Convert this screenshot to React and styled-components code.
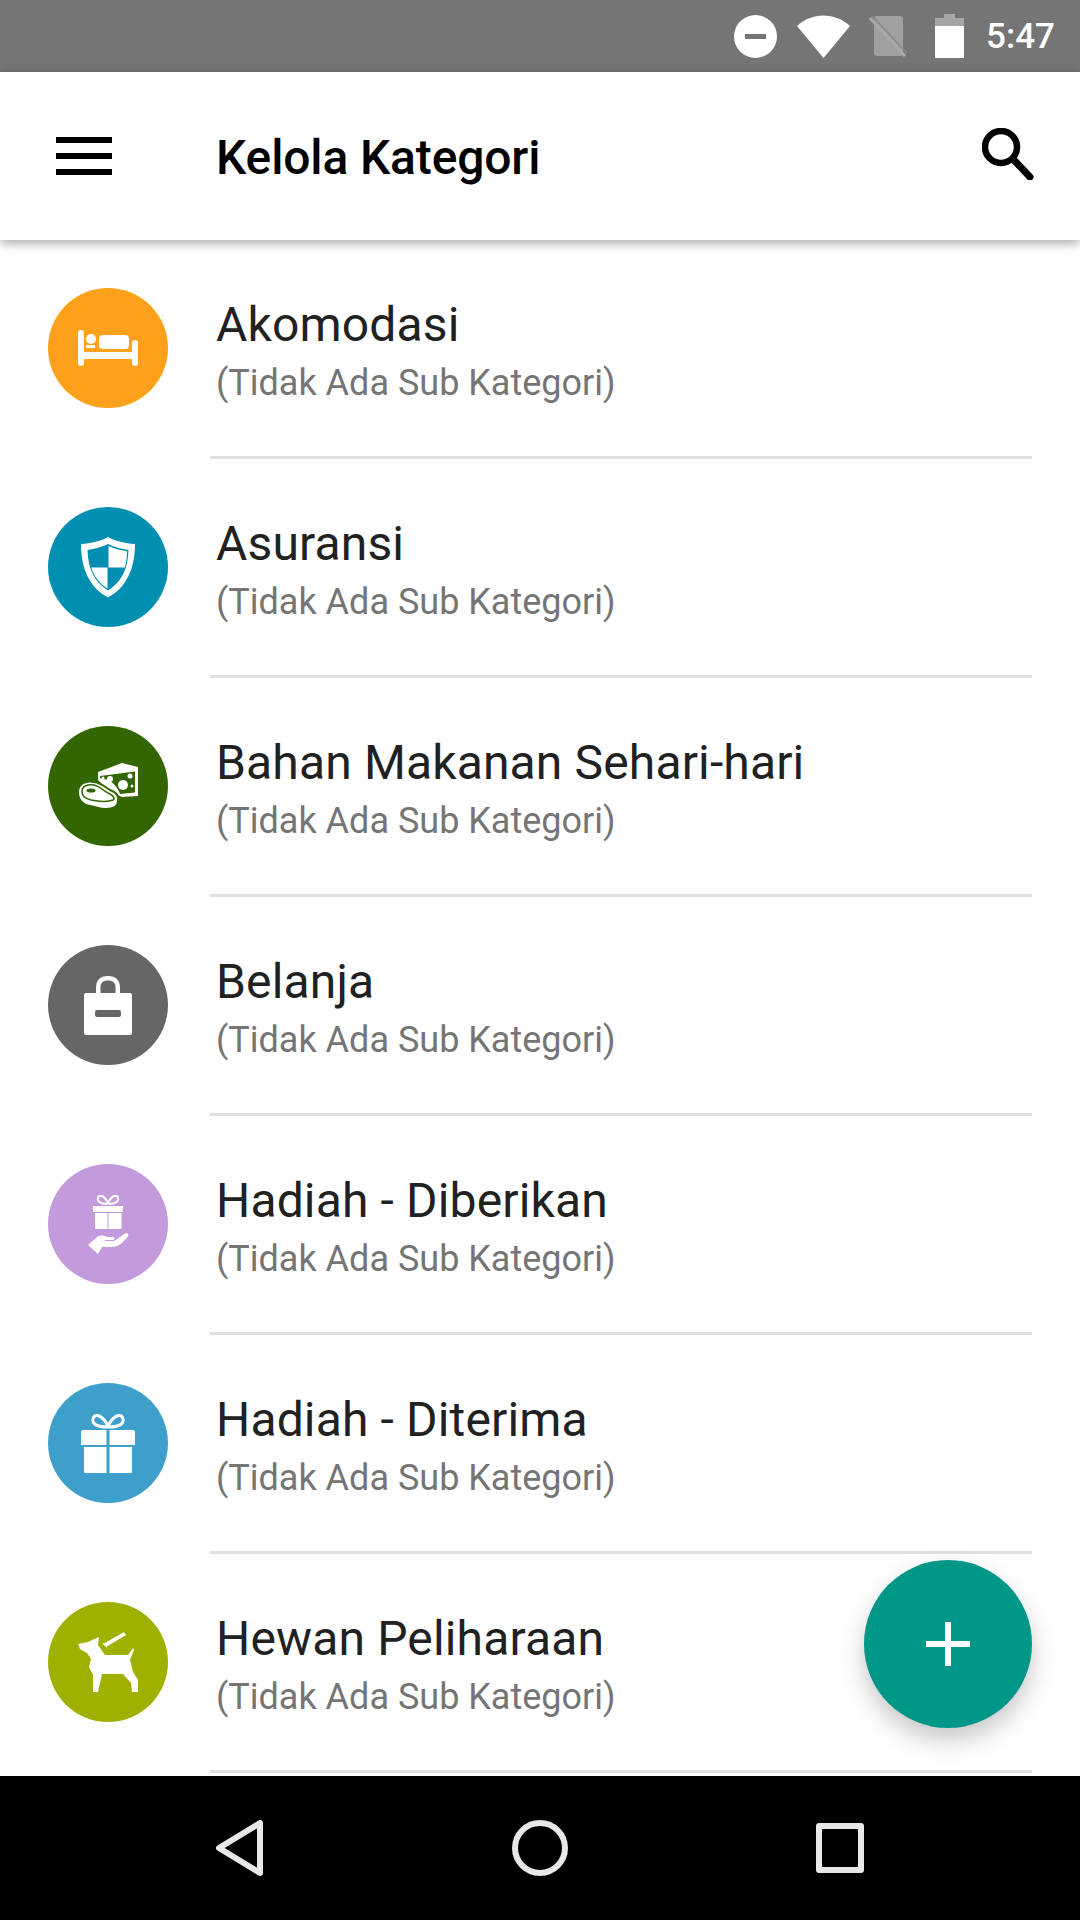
import React from "react";
import styled, { createGlobalStyle } from "styled-components";

const GlobalStyle = createGlobalStyle`
  html, body {
    margin: 0;
    padding: 0;
    background: #fff;
    font-family: Roboto, "Noto Sans", sans-serif;
  }
`;

const Screen = styled.div`
  position: relative;
  display: flex;
  flex-direction: column;
  width: 1080px;
  height: 1920px;
  overflow: hidden;
  background: #fff;
`;

const StatusBar = styled.div`
  display: flex;
  align-items: center;
  justify-content: flex-end;
  flex: none;
  height: 72px;
  padding-right: 25px;
  background: #757575;
`;

const StatusIcon = styled.svg`
  display: block;
  flex: none;
  margin-right: ${({ $gap }) => $gap}px;
`;

const Clock = styled.span`
  font-size: 35px;
  font-weight: 500;
  color: #fff;
`;

const AppBar = styled.header`
  position: relative;
  z-index: 2;
  display: flex;
  align-items: center;
  flex: none;
  height: 168px;
  padding: 0 46px 0 56px;
  background: #fff;
  box-shadow: 0 3px 10px rgba(0, 0, 0, 0.35);
`;

const Title = styled.h1`
  flex: 1;
  margin: 2px 0 0 104px;
  font-size: 48px;
  font-weight: 500;
  letter-spacing: -0.15px;
  color: #000;
`;

const SearchIcon = styled.svg`
  display: block;
  flex: none;
  margin-bottom: 4px;
`;

const List = styled.main`
  flex: 1;
  min-height: 0;
  overflow: hidden;
`;

const Row = styled.div`
  display: flex;
  height: 219px;
  padding-left: 48px;
`;

const Badge = styled.div`
  display: flex;
  align-items: center;
  justify-content: center;
  flex: none;
  width: 120px;
  height: 120px;
  margin-top: 48px;
  border-radius: 50%;
  background: ${({ $color }) => $color};
`;

const RowBody = styled.div`
  flex: 1;
  margin: 0 48px 0 42px;
  padding: 0 0 0 6px;
  border-bottom: 3px solid #e0e0e0;
`;

const RowTitle = styled.div`
  margin-top: 57px;
  font-size: 48px;
  line-height: 56px;
  letter-spacing: 0.15px;
  color: #212121;
`;

const RowSub = styled.div`
  margin-top: 6px;
  font-size: 36px;
  line-height: 48px;
  color: #757575;
`;

const Fab = styled.button`
  position: absolute;
  left: 864px;
  top: 1560px;
  display: flex;
  align-items: center;
  justify-content: center;
  width: 168px;
  height: 168px;
  padding: 0;
  border: none;
  border-radius: 50%;
  background: #009688;
  box-shadow: 0 12px 24px rgba(0, 0, 0, 0.22);
`;

const NavBar = styled.nav`
  display: flex;
  align-items: center;
  justify-content: space-between;
  flex: none;
  height: 144px;
  padding: 0 216px;
  background: #000;
`;

const TEAL = "#008FB0";
const LEAF = "#336600";

const BADGE_ICONS = {
  bed: (
    <>
      <rect x="30" y="42" width="6" height="36" rx="3" />
      <rect x="84" y="52" width="6" height="26" rx="3" />
      <rect x="35" y="64" width="50" height="7" />
      <circle cx="43" cy="51" r="5" />
      <rect x="38" y="57" width="9" height="3" />
      <rect x="51" y="47" width="30" height="14" rx="4" />
    </>
  ),
  shield: (
    <>
      <path d="M60 30C53 34 43 36.500 33 37C33 62 42 81 60 90.500C78 81 87 62 87 37C77 36.500 67 34 60 30Z" />
      <path
        d="M60 37C54 40 47 42 39.500 43C40 62 46.500 75 60 83.500C73.500 75 80 62 80.500 43C73 42 66 40 60 37Z"
        fill={TEAL}
      />
      <path d="M60.500 39C66 41.500 72 43.300 79 44.200C79 50 78.300 55.500 76.800 60.500H60.500Z" />
      <path d="M59.500 60.500H43.200C46 69.500 51.500 76.500 59.500 81.500Z" />
    </>
  ),
  food: (
    <>
      <path d="M50 46L74 37L90 41V70L74 71L62 66L50 54Z" />
      <path d="M52 50L87 45.500V66.500L72 68C70 62 66 57 60 54L52 52Z" fill={LEAF} />
      <circle cx="62" cy="53" r="3" />
      <circle cx="75" cy="59" r="5" />
      <circle cx="82" cy="50" r="2.500" />
      <circle cx="84" cy="60" r="1.500" />
      <circle cx="55" cy="52" r="1.500" />
      <path
        d="M30 66C30 58 38 54 46 56C54 57 58 62 62 64C68 66 71 70 70 75C70 81 64 83 58 83C52 83 48 81 42 80C35 79 30 74 30 66Z"
        stroke={LEAF}
        strokeWidth="2"
      />
      <path
        d="M34 65C34 60 40 58 46 59C53 61 57 66 62 68C66 70 67 73 65 74C58 77 50 75 43 74C38 73 34 70 34 65Z"
        fill="none"
        stroke={LEAF}
        strokeWidth="1.500"
      />
      <ellipse cx="43" cy="64.500" rx="4.500" ry="2" fill={LEAF} />
    </>
  ),
  bag: (
    <>
      <path d="M48 48V43C48 35 52 31 60 31C68 31 72 35 72 43V48H67.500V42C67.500 38 65 35.500 60 35.500C55 35.500 52.500 38 52.500 42V48Z" />
      <path
        fillRule="evenodd"
        d="M38 48H82A2 2 0 0 1 84 50V88A2 2 0 0 1 82 90H38A2 2 0 0 1 36 88V50A2 2 0 0 1 38 48ZM49 65A2 2 0 0 0 47 67V70A2 2 0 0 0 49 72H71A2 2 0 0 0 73 70V67A2 2 0 0 0 71 65Z"
      />
    </>
  ),
  giftHand: (
    <>
      <path
        fill="none"
        stroke="#fff"
        strokeWidth="2"
        d="M59 40C52 40 49 37 50 34C51 30 56 31 60 39C64 31 69 30 70 34C71 37 68 40 61 40"
      />
      <rect x="45" y="42" width="30" height="6" />
      <rect x="47" y="49" width="12.500" height="16" />
      <rect x="60.500" y="49" width="13" height="16" />
      <path d="M40 81L49 73C52 71 56 71 59 73L65 73C67 73 67 76 65 76L57 76L57 77L66 77C70 75 74 71 78 69C80 69 81 71 80 72C76 78 71 82 66 83L54 83L50 90Z" />
    </>
  ),
  gift: (
    <>
      <path
        fill="none"
        stroke="#fff"
        strokeWidth="3"
        d="M59 44C49 44 44 41 45 36C46 30 54 31 60 43C66 31 74 30 75 36C76 41 71 44 61 44"
      />
      <path d="M35 47H58.500V62H33.500A.5 .5 0 0 1 33 61.500V49A2 2 0 0 1 35 47ZM61.500 47H85A2 2 0 0 1 87 49V61.500A.5 .5 0 0 1 86.500 62H61.500Z" />
      <path d="M36 64H58.500V90H37A1 1 0 0 1 36 89ZM61.500 64H84V89A1 1 0 0 1 83 90H61.500Z" />
    </>
  ),
  dog: (
    <>
      <path d="M30 42L40 40L51 35L50 43L57 53H80L85 46L86 48L82 58L85 70L90 78V90H84L83 81L75 72H54L50 90H45V73L41 65L43 57L39 51L32 47Z" />
      <path d="M76 30L78 33L59 44.500L59 46L54 41L56 41.500Z" />
    </>
  ),
};

const CATEGORIES = [
  { name: "Akomodasi", color: "#FFA11A", icon: "bed" },
  { name: "Asuransi", color: TEAL, icon: "shield" },
  { name: "Bahan Makanan Sehari-hari", color: LEAF, icon: "food" },
  { name: "Belanja", color: "#666666", icon: "bag" },
  { name: "Hadiah - Diberikan", color: "#C39BDD", icon: "giftHand" },
  { name: "Hadiah - Diterima", color: "#3F9FCB", icon: "gift" },
  { name: "Hewan Peliharaan", color: "#A0B000", icon: "dog" },
];

function App() {
  return (
    <Screen>
      <GlobalStyle />
      <StatusBar>
        <StatusIcon $gap={20} width="43" height="43" viewBox="0 0 43 43" fill="#fff">
          <path
            fillRule="evenodd"
            d="M21.500 0A21.500 21.500 0 1 1 21.500 43A21.500 21.500 0 1 1 21.500 0ZM11 19V24H32V19Z"
          />
        </StatusIcon>
        <StatusIcon $gap={19} width="53" height="43" viewBox="0 0 53 43" fill="#fff">
          <path d="M0 11C15 -3 38 -3 53 11L26.500 43Z" />
        </StatusIcon>
        <StatusIcon $gap={28} width="38" height="43" viewBox="0 0 38 43">
          <path d="M8 1H31A3 3 0 0 1 34 4V39A2 2 0 0 1 32 41H8A3 3 0 0 1 5 38V4A3 3 0 0 1 8 1Z" fill="#a0a0a0" />
          <path d="M3 1L38 38" stroke="#8a8a8a" strokeWidth="1.500" />
          <path d="M1 3L36 41" stroke="#a8a8a8" strokeWidth="3" />
        </StatusIcon>
        <StatusIcon $gap={22} width="29" height="44" viewBox="0 0 29 44">
          <path d="M0 4H9V0H20V4H29V12H0Z" fill="#a6a6a6" />
          <rect y="12" width="29" height="32" fill="#fff" />
        </StatusIcon>
        <Clock>5:47</Clock>
      </StatusBar>

      <AppBar>
        <svg width="56" height="38" viewBox="0 0 56 38" fill="#000">
          <rect width="56" height="6" />
          <rect y="16" width="56" height="6" />
          <rect y="32" width="56" height="6" />
        </svg>
        <Title>Kelola Kategori</Title>
        <SearchIcon width="52" height="52" viewBox="0 0 52 52" fill="none" stroke="#000">
          <circle cx="19" cy="19" r="16" strokeWidth="6.500" />
          <path d="M31 31L48 49" strokeWidth="7" strokeLinecap="round" />
        </SearchIcon>
      </AppBar>

      <List>
        {CATEGORIES.map((category) => (
          <Row key={category.name}>
            <Badge $color={category.color}>
              <svg width="120" height="120" viewBox="0 0 120 120" fill="#fff">
                {BADGE_ICONS[category.icon]}
              </svg>
            </Badge>
            <RowBody>
              <RowTitle>{category.name}</RowTitle>
              <RowSub>(Tidak Ada Sub Kategori)</RowSub>
            </RowBody>
          </Row>
        ))}
      </List>

      <Fab aria-label="Tambah">
        <svg width="44" height="44" viewBox="0 0 44 44" fill="#fff">
          <rect x="19" width="6" height="44" />
          <rect y="19" width="44" height="6" />
        </svg>
      </Fab>

      <NavBar>
        <svg width="48" height="56" viewBox="0 0 48 56" fill="none" stroke="#e8e8e8" strokeWidth="6" strokeLinejoin="round">
          <path d="M44 3V53L3 28Z" />
        </svg>
        <svg width="56" height="56" viewBox="0 0 56 56" fill="none" stroke="#e8e8e8" strokeWidth="6">
          <circle cx="28" cy="28" r="25" />
        </svg>
        <svg width="48" height="50" viewBox="0 0 48 50" fill="none" stroke="#e8e8e8" strokeWidth="6" strokeLinejoin="round">
          <rect x="3" y="3" width="42" height="44" />
        </svg>
      </NavBar>
    </Screen>
  );
}

export default App;
